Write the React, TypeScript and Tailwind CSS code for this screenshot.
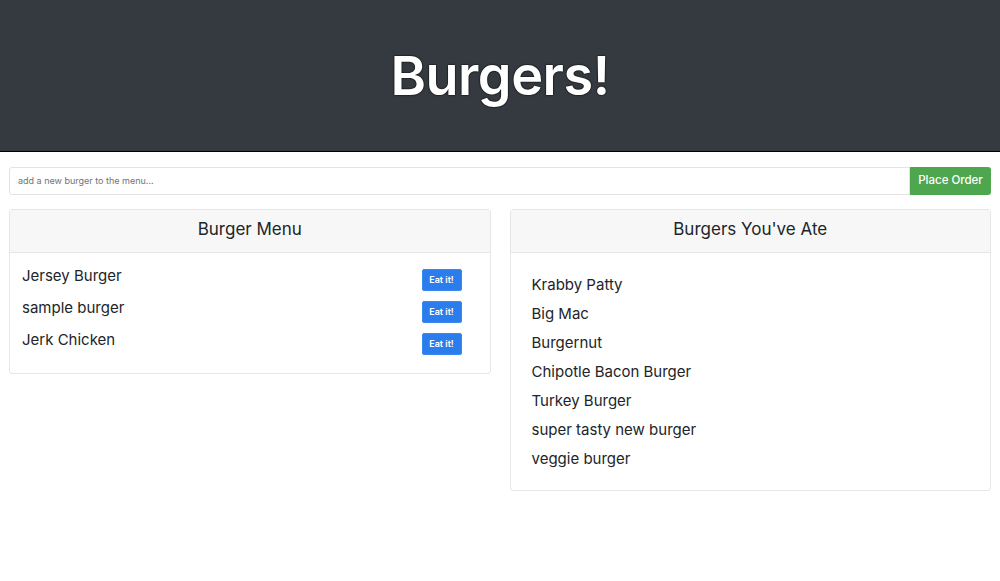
const menu = ["Jersey Burger", "sample burger", "Jerk Chicken"];
const eaten = [
  "Krabby Patty",
  "Big Mac",
  "Burgernut",
  "Chipotle Bacon Burger",
  "Turkey Burger",
  "super tasty new burger",
  "veggie burger",
];

export default function App() {
  return (
    <div className="min-h-[581px] bg-white text-[#212529] font-['Inter','Liberation_Sans',sans-serif]">
      <header className="h-[152px] bg-[#343a40] border-b border-black flex items-center justify-center">
        <h1 className="text-[54px] font-semibold tracking-[-0.5px] text-white [text-shadow:0_0_2px_#000,0_0_1px_#000]">
          Burgers!
        </h1>
      </header>

      <div className="px-[9px] pt-[15px]">
        <form className="flex h-[28px]" onSubmit={(e) => e.preventDefault()}>
          <input
            className="flex-1 border border-[#e3e3e3] rounded-l-[3px] px-[8px] text-[9px] text-[#495057] placeholder:text-[#6c757d] outline-none"
            placeholder="add a new burger to the menu..."
          />
          <button className="w-[81px] bg-[#4ea64e] text-white text-[11.5px] font-medium rounded-r-[3px]">
            Place Order
          </button>
        </form>

        <div className="grid grid-cols-2 gap-[19px] mt-[14px] items-start">
          <div className="border border-[#e6e6e6] rounded-[3px]">
            <div className="h-[43px] pb-[3px] bg-[#f7f7f7] border-b border-[#e6e6e6] flex items-center justify-center text-[17px]">
              Burger Menu
            </div>
            <ul className="px-[12px] pt-[16px] pb-[18px] flex flex-col gap-[10px]">
              {menu.map((b) => (
                <li key={b} className="flex items-start justify-between h-[22px]">
                  <span className="text-[15px] leading-[18px] -mt-[2px]">{b}</span>
                  <button className="w-[40px] h-[22px] mr-[16px] bg-[#2b7ded] border border-[#3b88f0] rounded-[2px] text-white text-[9px] font-semibold">
                    Eat it!
                  </button>
                </li>
              ))}
            </ul>
          </div>

          <div className="border border-[#e6e6e6] rounded-[3px]">
            <div className="h-[43px] pb-[3px] bg-[#f7f7f7] border-b border-[#e6e6e6] flex items-center justify-center text-[17px]">
              Burgers You've Ate
            </div>
            <ul className="px-[21px] pt-[22px] pb-[21px] flex flex-col gap-[9px]">
              {eaten.map((b) => (
                <li key={b} className="text-[15px] leading-[20px]">
                  {b}
                </li>
              ))}
            </ul>
          </div>
        </div>
      </div>
    </div>
  );
}
